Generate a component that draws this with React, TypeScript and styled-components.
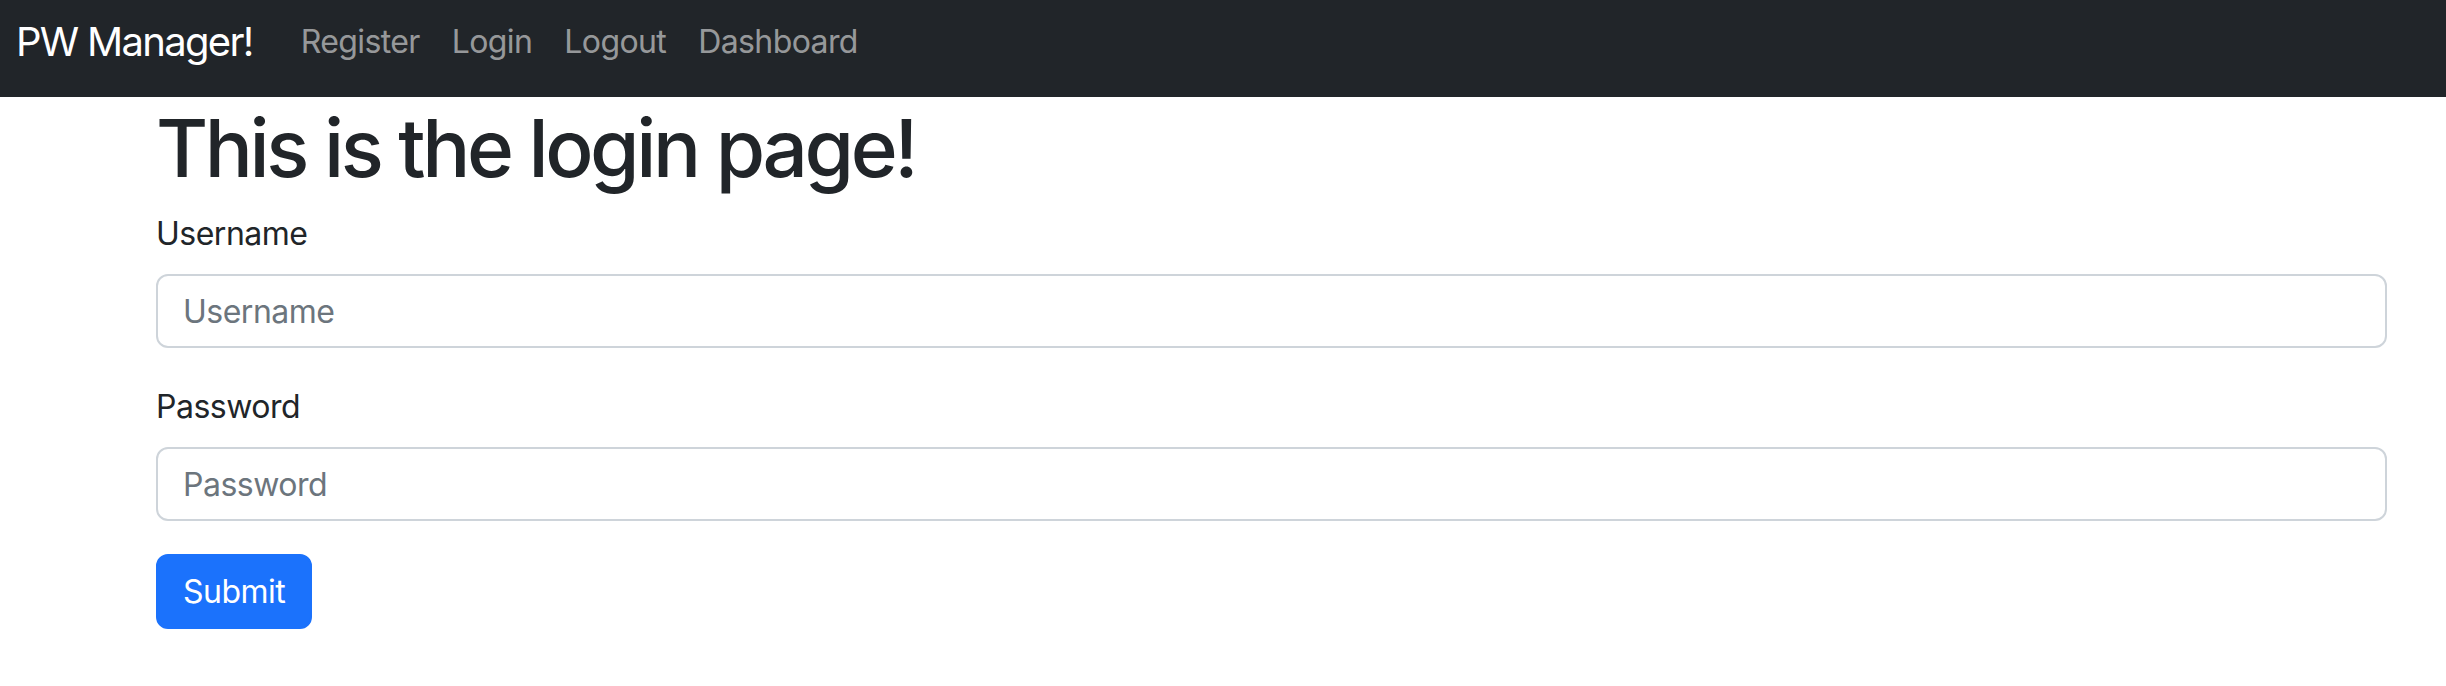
import React from "react";
import styled, { createGlobalStyle } from "styled-components";

const GlobalStyle = createGlobalStyle`
  html, body {
    margin: 0;
    padding: 0;
    background: #ffffff;
    font-family: Inter, "Noto Sans", "Liberation Sans", sans-serif;
    color: #212529;
  }
  * { box-sizing: border-box; }
`;

const Navbar = styled.nav`
  display: flex;
  align-items: center;
  height: 97px;
  padding: 0 16px 13px 16px;
  background: #212529;
`;

const Brand = styled.a`
  font-size: 40px;
  line-height: 60px;
  letter-spacing: -1.7px;
  color: #ffffff;
  text-decoration: none;
  margin-right: 32px;
  white-space: nowrap;
`;

const NavList = styled.div`
  display: flex;
  align-items: center;
`;

const NavLink = styled.a`
  font-size: 32px;
  line-height: 48px;
  letter-spacing: -0.6px;
  padding: 0 16px;
  color: rgba(255, 255, 255, 0.55);
  text-decoration: none;
  white-space: nowrap;
`;

const Main = styled.main`
  padding: 0 59px 0 156px;
`;

const Title = styled.h1`
  margin: 3px 0 14px;
  font-size: 80px;
  line-height: 96px;
  font-weight: 500;
  letter-spacing: -3.4px;
  color: #212529;
`;

const Form = styled.form`
  display: flex;
  flex-direction: column;
  align-items: flex-start;
`;

const Field = styled.div`
  width: 100%;
  margin-bottom: ${(p: { $gap: number }) => p.$gap}px;
`;

const Label = styled.label`
  display: block;
  font-size: 32px;
  line-height: 48px;
  letter-spacing: -0.5px;
  margin-bottom: 16px;
  color: #212529;
`;

const Input = styled.input`
  display: block;
  width: 100%;
  height: 74px;
  padding: 12px 25px;
  font-family: inherit;
  font-size: 32px;
  line-height: 48px;
  letter-spacing: -0.5px;
  color: #212529;
  background: #ffffff;
  border: 2px solid #ced4da;
  border-radius: 12px;
  outline: none;
  &::placeholder {
    color: #6c757d;
  }
`;

const SubmitButton = styled.button`
  height: 75px;
  padding: 0 25px;
  font-family: inherit;
  font-size: 32px;
  line-height: 48px;
  letter-spacing: -0.5px;
  color: #ffffff;
  background: #1b72fc;
  border: 2px solid #1b72fc;
  border-radius: 12px;
  cursor: pointer;
`;

export default function App() {
  return (
    <>
      <GlobalStyle />
      <Navbar>
        <Brand href="#">PW Manager!</Brand>
        <NavList>
          <NavLink href="#">Register</NavLink>
          <NavLink href="#">Login</NavLink>
          <NavLink href="#">Logout</NavLink>
          <NavLink href="#">Dashboard</NavLink>
        </NavList>
      </Navbar>
      <Main>
        <Title>This is the login page!</Title>
        <Form onSubmit={(e) => e.preventDefault()}>
          <Field $gap={35}>
            <Label htmlFor="username">Username</Label>
            <Input id="username" type="text" placeholder="Username" />
          </Field>
          <Field $gap={33}>
            <Label htmlFor="password">Password</Label>
            <Input id="password" type="password" placeholder="Password" />
          </Field>
          <SubmitButton type="submit">Submit</SubmitButton>
        </Form>
      </Main>
    </>
  );
}
